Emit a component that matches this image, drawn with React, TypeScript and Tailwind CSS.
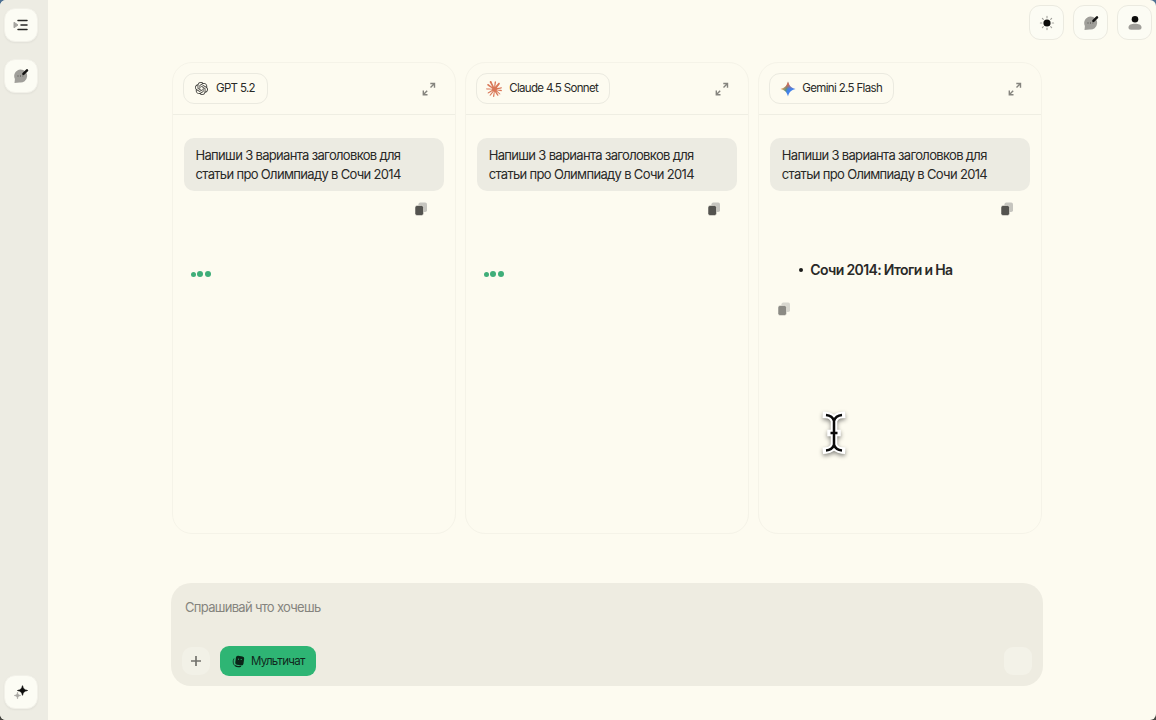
import type { ReactNode } from "react";
import { SiClaude, SiOpenai } from "react-icons/si";

const PROMPT = ["Напиши 3 варианта заголовков для", "статьи про Олимпиаду в Сочи 2014"];

function IconButton({ label, children, bordered = false }: { label: string; children: ReactNode; bordered?: boolean }) {
  return (
    <button
      aria-label={label}
      className={`flex items-center justify-center rounded-[11px] border bg-[#fcfcf4] ${
        bordered ? "size-[35px] border-[#ebeae0]" : "size-[34px] border-[#f2f1e9] shadow-xs"
      }`}
    >
      {children}
    </button>
  );
}

function MenuIcon() {
  return (
    <svg width="16" height="14" viewBox="0 0 16 14">
      <path d="M1 4.2 5 7 1 9.8Z" fill="#a5a49f" stroke="#a5a49f" strokeLinejoin="round" />
      <path d="M5 2.5h9M8 7h6M5 11.5h9" stroke="#292927" strokeWidth="1.5" strokeLinecap="round" />
    </svg>
  );
}

function ChatPenIcon() {
  return (
    <svg width="16" height="16" viewBox="0 0 16 16">
      <path d="M7.5 1.5a6.5 6.5 0 1 1-1 12.9L1.5 15l.4-4A6.5 6.5 0 0 1 7.5 1.5Z" fill="#a09f9a" />
      <path d="m10.4 5.9 3.6-3.6" stroke="#141413" strokeWidth="2.5" strokeLinecap="round" />
      <path d="M4.5 8h1M7 8h1M9.5 8h.7" stroke="#4c4c49" strokeWidth="1.1" />
    </svg>
  );
}

function SunIcon() {
  return (
    <svg width="16" height="16" viewBox="0 0 16 16">
      <circle cx="8" cy="8" r="3.6" fill="#0c0c0b" />
      <path
        d="M8 1.4v1.4M8 13.2v1.4M1.4 8h1.4M13.2 8h1.4M3.4 3.4l.9.9M11.7 11.7l.9.9M3.4 12.6l.9-.9M11.7 4.3l.9-.9"
        stroke="#a5a49f"
        strokeWidth="1.2"
        strokeLinecap="round"
      />
    </svg>
  );
}

function UserIcon() {
  return (
    <svg width="16" height="16" viewBox="0 0 16 16">
      <circle cx="8" cy="4.2" r="3.3" fill="#0c0c0b" />
      <path d="M1.5 12.5C1.5 9.8 4.5 8.8 8 8.8s6.5 1 6.5 3.7c0 1.6-1 2.2-2.5 2.2H4c-1.5 0-2.5-.6-2.5-2.2Z" fill="#a09f9a" />
    </svg>
  );
}

function SparkleIcon() {
  return (
    <svg width="16" height="16" viewBox="0 0 16 16">
      <path
        d="M9.5 1.7c.8 3.3 1.6 4.1 5 4.8-3.4.7-4.2 1.5-5 4.8-.8-3.3-1.6-4.1-5-4.8 3.4-.7 4.2-1.5 5-4.8Z"
        fill="#0c0c0b"
        stroke="#0c0c0b"
        strokeWidth=".8"
      />
      <path d="M4.5 8c.4 2.4 1 3 3.4 3.5-2.4.5-3 1.1-3.4 3.5-.4-2.4-1-3-3.4-3.5C3.5 11 4.1 10.4 4.5 8Z" fill="#aaa9a4" stroke="#aaa9a4" strokeWidth=".5" />
    </svg>
  );
}

function ExpandIcon() {
  return (
    <svg width="14" height="14" viewBox="0 0 14 14" fill="none" stroke="#85847e" strokeWidth="1.4">
      <path d="m8.5 5.5 4-4M8.3 1.5h4.2v4.2M5.2 8.8l-4 4M1.3 8.5v4.2h4.2" />
    </svg>
  );
}

function CopyIcon({ faded = false }: { faded?: boolean }) {
  return (
    <svg width="14" height="14" viewBox="0 0 14 14">
      <rect x="4.5" y=".5" width="8.5" height="9.5" rx="1.8" fill={faded ? "#d8d7cf" : "#c6c5bf"} />
      <rect x="1" y="3.5" width="8.5" height="10" rx="2" fill={faded ? "#8b8a84" : "#54534f"} stroke="#fdfbf0" strokeWidth=".5" />
    </svg>
  );
}

const STAR = "M8 .5c1 4.3 3.2 6.5 7.5 7.5C11.2 9 9 11.2 8 15.5 7 11.2 4.8 9 .5 8 4.8 7 7 4.8 8 .5Z";

function GeminiIcon() {
  return (
    <svg width="16" height="16" viewBox="0 0 16 16">
      <defs>
        <linearGradient id="gemini" x1="1" y1="5" x2="13" y2="10" gradientUnits="userSpaceOnUse">
          <stop offset=".15" stopColor="#e2a45c" />
          <stop offset=".45" stopColor="#5f927e" />
          <stop offset=".6" stopColor="#4181e8" />
          <stop offset="1" stopColor="#4584ed" />
        </linearGradient>
        <linearGradient id="geminiTop" x1="8" y1="0" x2="8" y2="8" gradientUnits="userSpaceOnUse">
          <stop offset=".4" stopColor="#dc6553" />
          <stop offset="1" stopColor="#dc6553" stopOpacity="0" />
        </linearGradient>
      </defs>
      <path d={STAR} fill="url(#gemini)" />
      <path d={STAR} fill="url(#geminiTop)" />
    </svg>
  );
}

function MultichatIcon() {
  return (
    <svg width="13" height="13" viewBox="0 0 13 13">
      <path d="M2 3.5C.8 5.5.8 8.5 2.5 10.5" fill="none" stroke="#17452f" strokeWidth="1" />
      <rect x="3.5" y="1" width="8.3" height="9" rx="2" transform="rotate(8 7 6)" fill="#0b2418" />
      <path d="M6 4.2h1M8.7 4.5h1" stroke="#2eb574" strokeWidth="1" />
      <path d="M3 10.5q2.5 1.8 6 .6" fill="none" stroke="#0b2418" strokeWidth="1.4" />
    </svg>
  );
}

function TypingDots() {
  return (
    <div className="flex items-center gap-[1.5px]">
      <span className="size-[5px] rounded-full bg-[#3fae79]" />
      <span className="size-[6px] rounded-full bg-[#3fae79]" />
      <span className="size-[6px] rounded-full bg-[#3fae79]" />
    </div>
  );
}

interface Model {
  name: string;
  icon: ReactNode;
  pillClass: string;
  answer?: string;
}

const MODELS: Model[] = [
  { name: "GPT 5.2", icon: <SiOpenai size={13} color="#3b3b38" />, pillClass: "w-[85px] pl-[11px] gap-2" },
  { name: "Claude 4.5 Sonnet", icon: <SiClaude size={16} color="#d97757" />, pillClass: "w-[134px] pl-[9px] gap-[7px]" },
  { name: "Gemini 2.5 Flash", icon: <GeminiIcon />, pillClass: "w-[125px] pl-[10px] gap-[6px]", answer: "Сочи 2014: Итоги и На" },
];

function ChatColumn({ model }: { model: Model }) {
  return (
    <section className="flex flex-col rounded-[20px] border border-[#f5f3e8]">
      <header className="flex h-[52px] items-center justify-between border-b border-[#efeee3] pr-[19px] pl-[10px]">
        <div className={`flex h-[31px] items-center rounded-[11px] border border-[#ebeae0] text-[11.5px] tracking-[-0.66px] whitespace-nowrap ${model.pillClass}`}>
          {model.icon}
          <span className="pt-px">{model.name}</span>
        </div>
        <ExpandIcon />
      </header>
      <div className="mx-[10.5px] mt-[23px] h-[53px] rounded-[10px] bg-[#ecebe2] px-[12px] pt-[8px] text-[13px] leading-[19px] tracking-[-0.67px] whitespace-nowrap">
        {PROMPT.map((line) => (
          <p key={line}>{line}</p>
        ))}
      </div>
      <div className="mt-[11px] flex justify-end pr-[27px]">
        <CopyIcon />
      </div>
      {model.answer ? (
        <div className="pt-[44px]">
          <div className="flex items-center pl-[40px] text-[14px] leading-[20px] font-semibold tracking-[-0.64px] whitespace-nowrap">
            <span className="mr-[7px] size-[4px] rounded-full bg-[#1c1c1a]" />
            {model.answer}
          </div>
          <div className="pt-[22px] pl-[18px]">
            <CopyIcon faded />
          </div>
        </div>
      ) : (
        <div className="pt-[55px] pl-[17.5px]">
          <TypingDots />
        </div>
      )}
    </section>
  );
}

function PromptBox() {
  return (
    <div className="mt-[49px] -ml-px flex h-[103px] w-[872px] flex-col justify-between rounded-[20px] bg-[#eeece1] px-[14px] pt-[14px] pb-[10px]">
      <p className="text-[13px] leading-[20px] tracking-[-0.7px] text-[#85847e]">Спрашивай что хочешь</p>
      <div className="flex items-center">
        <button aria-label="Добавить" className="-ml-[3px] flex h-[28px] w-[28px] items-center justify-center rounded-[10px] bg-[#f2f1e7]">
          <svg width="12" height="12" viewBox="0 0 12 12" stroke="#73726c" strokeWidth="1.7">
            <path d="M6 1v10M1 6h10" />
          </svg>
        </button>
        <button className="ml-[10px] flex h-[30px] w-[96px] items-center gap-[6px] rounded-[9px] bg-[#2eb574] pl-[12px] text-[11.5px] tracking-[-0.72px] text-[#10291d]">
          <MultichatIcon />
          <span className="pt-px">Мультичат</span>
        </button>
        <span className="mr-[-3px] ml-auto size-[28px] rounded-[9px] bg-[#f3f2e8]" />
      </div>
    </div>
  );
}

const BEAM = "M7 6q6.5.5 8 6v23.5q-1.5 5.5-8 6M23 6q-6.5.5-8 6v23.5q1.5 5.5 8 6M11.5 24h7";

function TextCursor() {
  return (
    <svg className="absolute top-[409px] left-[819px] drop-shadow-[0_2px_2px_rgba(0,0,0,0.45)]" width="30" height="48" viewBox="0 0 30 48" fill="none">
      <path d={BEAM} stroke="#fff" strokeWidth="6.5" strokeLinecap="square" />
      <path d={BEAM} stroke="#0a0a0a" strokeWidth="2.5" />
    </svg>
  );
}

export default function App() {
  return (
    <div className="h-[720px] w-[1156px] overflow-hidden bg-linear-to-b from-[#4d7092] to-[#45443f]">
      <div className="relative flex h-full overflow-hidden rounded-[6px] bg-[#fdfbf0] font-['Inter','Liberation_Sans',sans-serif] text-[#292927]">
        <aside className="flex w-[48px] flex-col items-start bg-[#edece3] pt-[8px] pb-[11px] pl-[4px]">
          <IconButton label="Меню"><MenuIcon /></IconButton>
          <div className="mt-[17px]">
            <IconButton label="Новый чат"><ChatPenIcon /></IconButton>
          </div>
          <div className="mt-auto">
            <IconButton label="Возможности"><SparkleIcon /></IconButton>
          </div>
        </aside>
        <main className="flex flex-1 flex-col">
          <div className="flex h-[62px] justify-end gap-[9px] pt-[5px] pr-[4px]">
            <IconButton label="Тема" bordered><SunIcon /></IconButton>
            <IconButton label="Новый чат" bordered><ChatPenIcon /></IconButton>
            <IconButton label="Профиль" bordered><UserIcon /></IconButton>
          </div>
          <div className="ml-[124px] w-[870px]">
            <div className="grid h-[472px] grid-cols-3 gap-[9.5px]">
              {MODELS.map((model) => (
                <ChatColumn key={model.name} model={model} />
              ))}
            </div>
            <PromptBox />
          </div>
        </main>
        <TextCursor />
      </div>
    </div>
  );
}
